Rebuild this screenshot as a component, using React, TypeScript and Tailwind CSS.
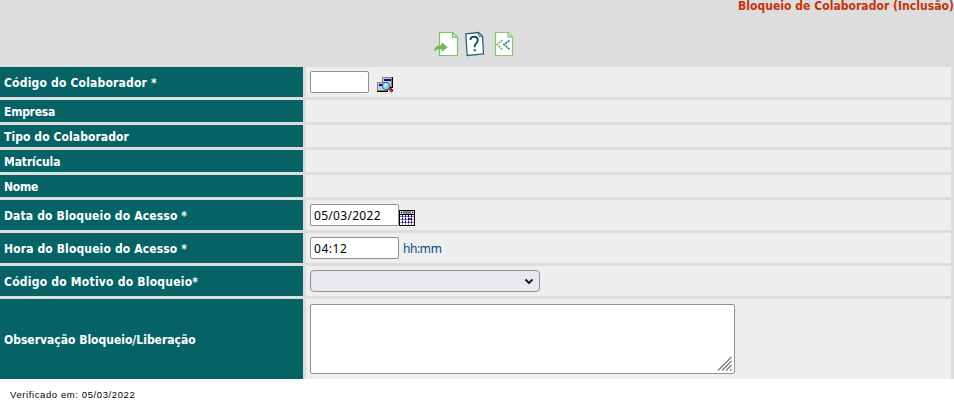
import type { ReactNode } from "react";

const labelFont = "font-['DejaVu_Sans_Condensed','DejaVu_Sans',sans-serif] [font-stretch:condensed]";

function Row({ label, height, spacing, children }: { label: string; height: string; spacing: string; children?: ReactNode }) {
  return (
    <div className={`flex gap-[3px] ${height}`}>
      <div className="flex w-[303px] shrink-0 items-center bg-[#056366] pt-[2px] pl-1">
        <span className={`${labelFont} whitespace-nowrap text-[12px] leading-[14px] font-bold text-white ${spacing}`}>{label}</span>
      </div>
      <div className="flex w-[645px] items-center bg-[#eeeeee] pl-1">{children}</div>
    </div>
  );
}

function ConfirmIcon() {
  return (
    <svg width="26" height="26" viewBox="0 0 26 26" fill="none">
      <path d="M6.5 1.5H19.5L24.5 6V24.5H6.5Z" fill="#fff" stroke="#7fc35b" strokeWidth="1.2" />
      <path d="M19.5 1.5V6H24.5" stroke="#7fc35b" strokeWidth="1.4" />
      <path d="M1 20.5C1 16.5 4 14.2 8.5 14.2V11.3L14.8 16.3L8.5 21V18.5C5 18 3 18.5 1 20.5Z" fill="#72b957" />
    </svg>
  );
}

function HelpIcon() {
  return (
    <svg width="20" height="26" viewBox="0 0 20 26" fill="none">
      <path d="M0.8 2.8L13.5 1.5L17.5 5.2L18.5 22.8L2.2 24.5Z" fill="#fff" stroke="#28666b" strokeWidth="1.3" />
      <path d="M13.5 1.5L14 5.5L17.5 5.2" stroke="#28666b" />
      <path d="M5.4 9C5.4 4.8 12.6 4.6 12.8 8.8C12.9 12 9.4 12.3 9.6 16.3" stroke="#15545a" strokeWidth="1.9" />
      <path d="M8.7 18.2H10.8V20.2H8.7Z" fill="#15545a" />
    </svg>
  );
}

function BackIcon() {
  return (
    <svg width="20" height="26" viewBox="0 0 20 26" fill="none">
      <path d="M1.5 1.5H14L18.5 6V24.5H1.5Z" fill="#fff" stroke="#8bc873" strokeWidth="1.2" />
      <path d="M14 1.5V6H18.5" stroke="#8bc873" strokeWidth="1.3" />
      <path d="M8.5 9L3 13.5L8.5 18.5" stroke="#82b949" strokeWidth="1.7" strokeDasharray="2.2 .8" />
      <path d="M15.5 9.5L10 13.5L15.5 18" stroke="#168a72" strokeWidth="1.7" strokeDasharray="2.2 .8" />
    </svg>
  );
}

function SearchIcon() {
  return (
    <svg width="16" height="16" viewBox="0 0 16 16" fill="none">
      <path d="M5 0H16V11H5Z" fill="#000" />
      <path d="M5 0H15V10H5Z" fill="#808080" />
      <path d="M6 1H14V9H6Z" fill="#ccc" />
      <path d="M7 2H14V4H7Z" fill="#0000b5" />
      <path d="M0 5H11V15H0Z" fill="#000" />
      <path d="M0 5H10V14H0Z" fill="#808080" />
      <path d="M1 6H9V13H1Z" fill="#ccc" />
      <path d="M2 7H7V9H2Z" fill="#0000b5" />
      <path d="M11 10L15.5 14.5" stroke="#000" strokeWidth="3" />
      <path d="M11.5 11L14.5 14.5" stroke="#f33020" strokeWidth="2.3" />
      <circle cx="9" cy="9" r="3.7" fill="#7fd9f3" stroke="#27708f" />
      <path d="M7 9L9 6.5H10.5L8 10Z" fill="#fff" />
    </svg>
  );
}

function CalendarIcon() {
  return (
    <svg width="16" height="16" viewBox="0 0 16 16" shapeRendering="crispEdges">
      <path d="M0 0H16V16H0Z" fill="#000" />
      <path d="M1 1H15V4H1Z" fill="#808080" />
      <path d="M1 1H4V4H1ZM12 1H15V4H12Z" fill="#ccc" />
      <path d="M2 2H3V3H2ZM13 2H14V3H13Z" fill="#000" />
      <path d="M1 5H15V15H1Z" fill="#fff" />
      <path d="M1 6H15V7H1ZM1 9H15V10H1ZM1 12H15V13H1ZM3 5H4V15H3ZM6 5H7V15H6ZM9 5H10V15H9ZM12 5H13V15H12Z" fill="#8c8c8c" />
      <path d="M3 5h1v2h-1zM6 5h1v2h-1zM9 5h1v2h-1zM12 5h1v2h-1zM3 8h1v2h-1zM6 8h1v2h-1zM9 8h1v2h-1zM12 8h1v2h-1zM3 11h1v2h-1zM6 11h1v2h-1zM9 11h1v2h-1zM12 11h1v2h-1z" fill="#0000ff" />
      <path d="M10 8H12V10H10Z" fill="#f00" />
    </svg>
  );
}

const field = "border border-[#8f8f9d] bg-white outline-none";
const inputText = "font-['Noto_Sans',sans-serif] text-[12px] leading-[20px] text-black";

export default function App() {
  return (
    <main className="h-[409px] w-[954px] overflow-hidden bg-white">
      <section className="h-[379px] bg-[#dddddd]">
        <header className="flex h-[31px] justify-end">
          <h1 className={`${labelFont} whitespace-nowrap text-[12px] leading-[12px] font-bold tracking-[0.045px] text-[#c53406]`}>Bloqueio de Colaborador (Inclusão)</h1>
        </header>
        <nav className="flex h-9 pl-[433px]">
          <button type="button" aria-label="Confirmar" className="flex h-[26px] w-[26px]"><ConfirmIcon /></button>
          <button type="button" aria-label="Ajuda" className="ml-[6px] flex h-[26px] w-5"><HelpIcon /></button>
          <button type="button" aria-label="Voltar" className="ml-[9px] flex h-[26px] w-5"><BackIcon /></button>
        </nav>
        <form className="flex flex-col gap-[3px]">
          <Row label="Código do Colaborador *" height="h-[30px]" spacing="tracking-[0.19px]">
            <input aria-label="Código do Colaborador" className={`${field} ${inputText} h-[22px] w-[59px] rounded-[2px] px-1`} />
            <button type="button" aria-label="Pesquisar" className="mt-[6px] ml-2 flex"><SearchIcon /></button>
          </Row>
          <Row label="Empresa" height="h-[22px]" spacing="tracking-[-0.25px]" />
          <Row label="Tipo do Colaborador" height="h-[22px]" spacing="tracking-[0.08px]" />
          <Row label="Matrícula" height="h-[22px]" spacing="tracking-[-0.1px]" />
          <Row label="Nome" height="h-[22px]" spacing="tracking-[-0.2px]" />
          <Row label="Data do Bloqueio do Acesso *" height="h-[30px]" spacing="tracking-[0.15px]">
            <input aria-label="Data" defaultValue="05/03/2022" className={`${field} ${inputText} h-[22px] w-[89px] rounded-[2px] px-[3px] tracking-[0.3px]`} />
            <button type="button" aria-label="Calendário" className="mt-[6px] flex"><CalendarIcon /></button>
          </Row>
          <Row label="Hora do Bloqueio do Acesso *" height="h-[30px]" spacing="tracking-[0.13px]">
            <input aria-label="Hora" defaultValue="04:12" className={`${field} ${inputText} h-[22px] w-[89px] rounded-[2px] px-[3px] tracking-[0.55px]`} />
            <span className="mt-px ml-1 font-['Noto_Sans',sans-serif] text-[12px] leading-4 tracking-[-0.4px] text-[#0b478b]">hh:mm</span>
          </Row>
          <Row label="Código do Motivo do Bloqueio*" height="h-[30px]" spacing="tracking-[0.23px]">
            <button type="button" aria-label="Código do Motivo" className="flex h-[22px] w-[230px] items-center justify-end rounded-[4px] border border-[#8f8f9d] bg-[#e9e9ed] pr-[5px]">
              <svg width="10" height="8" viewBox="0 0 10 8" fill="none"><path d="M1.5 2.5L5 6L8.5 2.5" stroke="#111" strokeWidth="1.8" /></svg>
            </button>
          </Row>
          <Row label="Observação Bloqueio/Liberação" height="h-20" spacing="">
            <div className="flex h-[70px] w-[425px] items-end justify-end rounded-[2px] border border-[#8f8f9d] bg-white pr-[2px] pb-[2px]">
              <svg width="15" height="15" viewBox="0 0 15 15"><path d="M1 14.5L14.5 1M5 14.5L14.5 5M9 14.5L14.5 9M13 14.5L14.5 13" stroke="#777" strokeWidth="1.2" /></svg>
            </div>
          </Row>
        </form>
      </section>
      <footer className="pt-[10px] pl-[10px] font-['Liberation_Sans',Arial,sans-serif] text-[9.5px] leading-[12px] tracking-[0.6px] text-black">Verificado em: 05/03/2022</footer>
    </main>
  );
}
